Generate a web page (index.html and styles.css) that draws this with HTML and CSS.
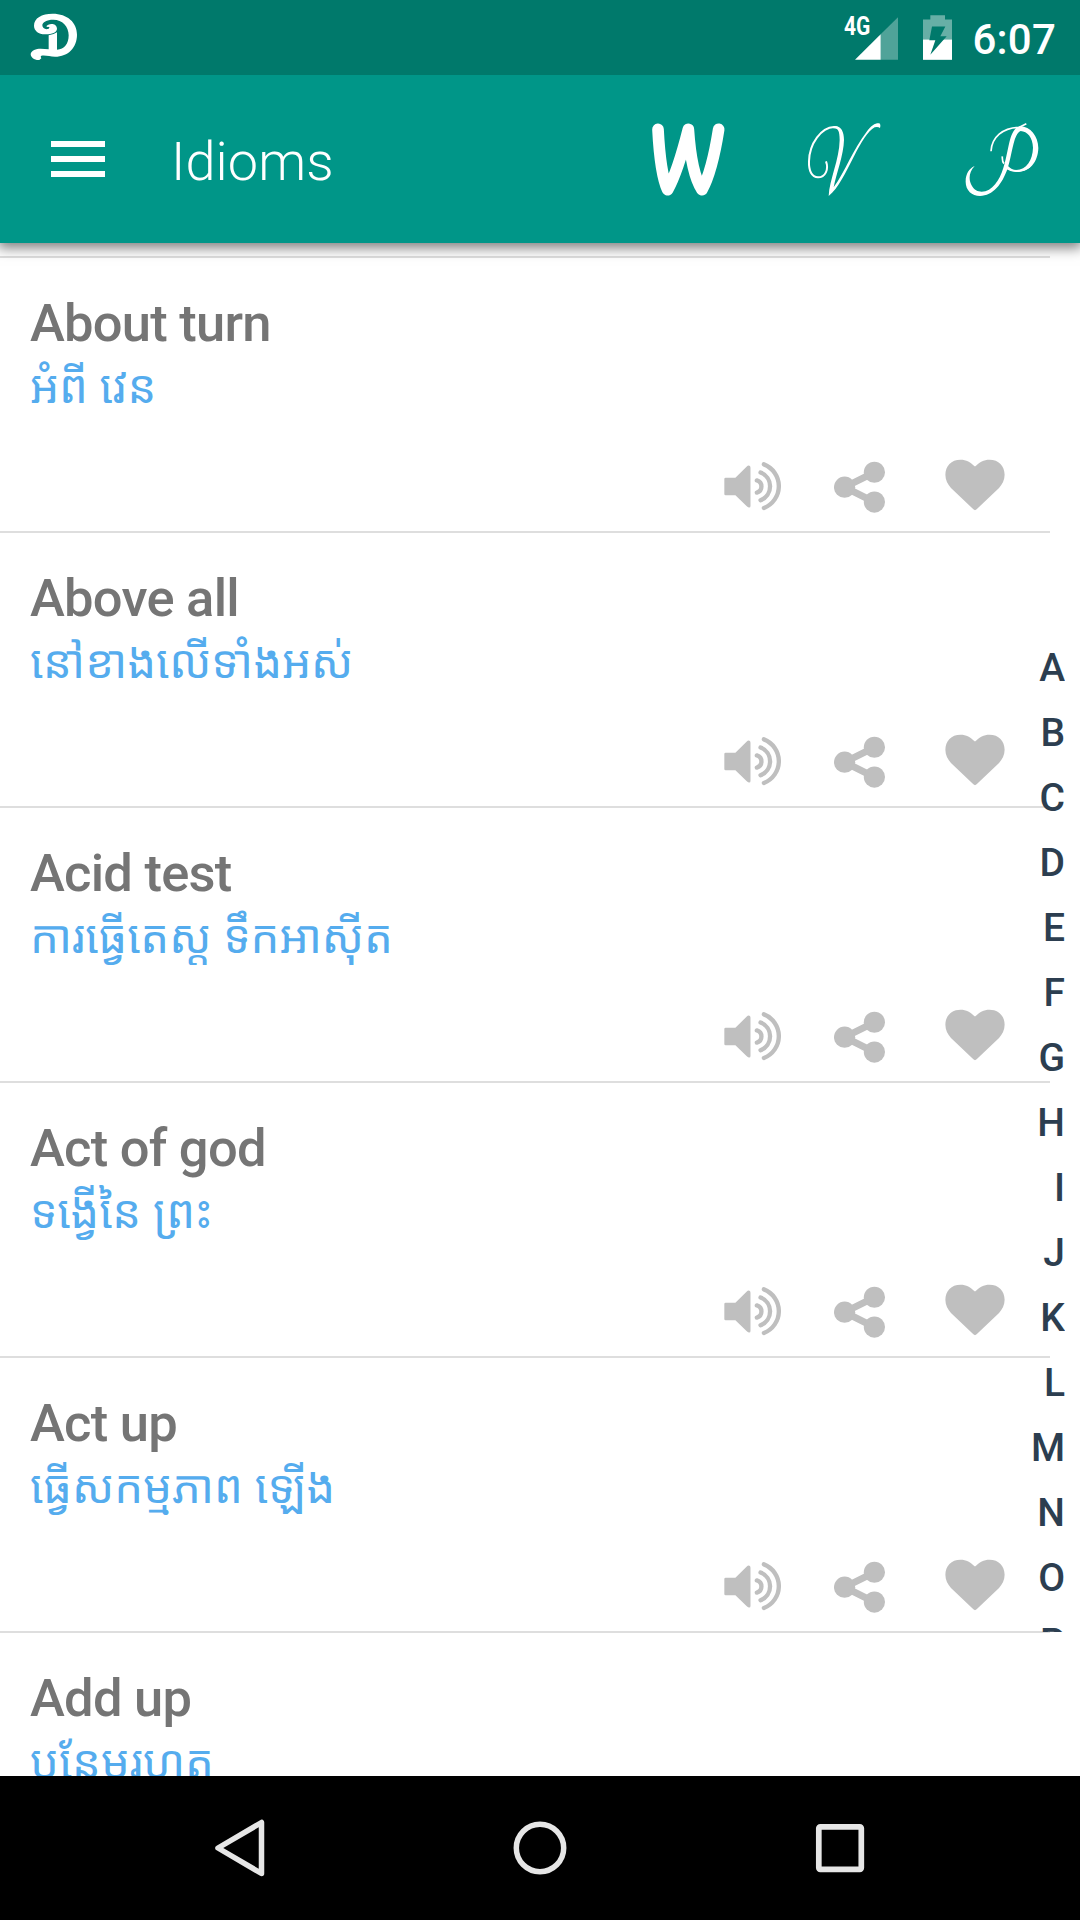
FILE: index.html
```html
<!DOCTYPE html>
<html lang="en">
<head>
<meta charset="utf-8">
<title>Idioms</title>
<link rel="stylesheet" href="styles.css">
</head>
<body>
<svg class="sprite" aria-hidden="true">
  <symbol id="speaker" viewBox="0 0 170 146">
    <path d="M5 47H34L68 13Q72 9 76 11Q79 12 79 17V131Q79 136 75 136Q72 136 68 132L34 99H5Q1 99 1 95V51Q1 47 5 47Z" fill="currentColor"/>
    <path d="M98 55A18.700 18.700 0 0 1 98 91M109 31A44.500 44.500 0 0 1 109 114M119 7A69.700 69.700 0 0 1 119 137" fill="none" stroke="currentColor" stroke-width="13" stroke-linecap="round"/>
  </symbol>
  <symbol id="share" viewBox="0 0 154 158">
    <path d="M122 33L32 78L122 123" fill="none" stroke="currentColor" stroke-width="21"/>
    <circle cx="32" cy="78" r="32" fill="currentColor"/>
    <circle cx="122" cy="33" r="32" fill="currentColor"/>
    <circle cx="122" cy="123" r="32" fill="currentColor"/>
  </symbol>
  <symbol id="heart" viewBox="0 0 182 158">
    <path d="M91 23C78 10 64 2 47 2C19 2 1 21 1 48C1 64 8 77 18 88L86 153Q91 158 96 153L164 88C174 77 181 64 181 48C181 21 163 2 135 2C118 2 104 10 91 23Z" fill="currentColor"/>
  </symbol>
</svg>

<div class="screen">
  <header class="status-bar">
    <svg class="app-logo" viewBox="90 40 144 144">
      <path d="M102 78C102 55 125 42 158 42C202 42 231 68 231 105C231 143 205 171 165 171C150 171 138 166 124 168Q120 170 124 176L118 181C103 182 92 173 92 163C94 152 108 147 122 147L146 149V107Q159 106 171 98V150C193 150 206 132 206 107C206 80 187 60 160 60C140 60 127 68 127 77C127 86 137 91 146 87Q150 84 147 81Q142 83 139 80C143 71 170 68 171 87C171 98 155 104 138 104C116 105 102 93 102 78Z" fill="#fff"/>
    </svg>
    <div class="status-icons">
      <span class="network">4G</span>
      <svg class="signal" viewBox="0 0 129 128">
        <path d="M129 0V128H77V51Z" fill="#50a399"/>
        <path d="M77 51V128H0Z" fill="#fff"/>
      </svg>
      <svg class="battery" viewBox="0 0 87 134">
        <path d="M22 0H66V13H87V74H0V13H22Z" fill="#67afa6"/>
        <path d="M0 73H87V134H0Z" fill="#fff"/>
        <path d="M27 34H67L52 63H71L22 119L37 75H19Z" fill="#00796b"/>
      </svg>
      <span class="clock">6:07</span>
    </div>
  </header>

  <div class="toolbar">
    <svg class="menu" viewBox="0 0 54 36"><path d="M0 3H54M0 18H54M0 33H54" stroke="#fff" stroke-width="6"/></svg>
    <h1 class="title">Idioms</h1>
    <div class="tools">
      <svg class="tool" viewBox="93 68 219 219">
        <path d="M111 87Q118 222 140 268Q170 214 202 87Q211 220 243 268Q273 214 293 87" fill="none" stroke="#fff" stroke-width="35" stroke-linecap="round" stroke-linejoin="round"/>
      </svg>
      <svg class="tool" viewBox="563 68 219 219">
        <path d="M617 183C626 207 615 231 593 231C574 231 565 211 566 183C567 130 603 81 641 80C655 80 661 89 663 101" fill="none" stroke="#fff" stroke-width="6"/>
        <path d="M641 77C662 76 671 93 671 119C670 164 648 220 640 261C674 214 699 145 739 94C754 75 764 68 777 69Q782 72 779 83Q773 78 763 81C743 91 723 126 701 168C675 218 654 265 625 287C627 239 657 178 658 119C658 91 653 83 638 83Z" fill="#fff"/>
      </svg>
      <svg class="tool" viewBox="1034 68 219 219">
        <path d="M1112 153C1114 111 1147 82 1197 81M1218 70L1194 82M1146 168Q1145 183 1151 190M1159 204C1177 216 1209 215 1228 199" fill="none" stroke="#fff" stroke-width="5"/>
        <path d="M1199 78C1231 79 1253 107 1254 143C1253 187 1226 216 1188 215Q1171 214 1160 205L1164 198Q1173 209 1188 209C1218 208 1237 180 1238 142C1237 111 1221 93 1201 92C1179 101 1177 156 1162 204C1145 253 1118 286 1079 287C1054 287 1035 269 1036 242C1036 222 1046 204 1063 197C1045 216 1044 239 1055 257C1065 276 1088 278 1106 268C1134 252 1148 213 1156 177C1167 134 1170 83 1199 78Z" fill="#fff"/>
      </svg>
    </div>
  </div>

  <main class="content">
    <ul class="idioms">
      <li class="idiom">
        <h2 class="phrase">About turn</h2>
        <p class="meaning" lang="km">អំពី វេន</p>
        <div class="actions"><svg class="speaker"><use href="#speaker"/></svg><svg class="share"><use href="#share"/></svg><svg class="heart"><use href="#heart"/></svg></div>
      </li>
      <li class="idiom">
        <h2 class="phrase">Above all</h2>
        <p class="meaning" lang="km">នៅខាងលើទាំងអស់</p>
        <div class="actions"><svg class="speaker"><use href="#speaker"/></svg><svg class="share"><use href="#share"/></svg><svg class="heart"><use href="#heart"/></svg></div>
      </li>
      <li class="idiom">
        <h2 class="phrase">Acid test</h2>
        <p class="meaning" lang="km">ការធ្វើតេស្ត ទឹកអាស៊ីត</p>
        <div class="actions"><svg class="speaker"><use href="#speaker"/></svg><svg class="share"><use href="#share"/></svg><svg class="heart"><use href="#heart"/></svg></div>
      </li>
      <li class="idiom">
        <h2 class="phrase">Act of god</h2>
        <p class="meaning" lang="km">ទង្វើនៃ ព្រះ</p>
        <div class="actions"><svg class="speaker"><use href="#speaker"/></svg><svg class="share"><use href="#share"/></svg><svg class="heart"><use href="#heart"/></svg></div>
      </li>
      <li class="idiom">
        <h2 class="phrase">Act up</h2>
        <p class="meaning" lang="km">ធ្វើសកម្មភាព ឡើង</p>
        <div class="actions"><svg class="speaker"><use href="#speaker"/></svg><svg class="share"><use href="#share"/></svg><svg class="heart"><use href="#heart"/></svg></div>
      </li>
      <li class="idiom">
        <h2 class="phrase">Add up</h2>
        <p class="meaning" lang="km">បន្ថែមរហូត</p>
      </li>
    </ul>
    <ol class="index">
      <li>A</li><li>B</li><li>C</li><li>D</li><li>E</li><li>F</li><li>G</li><li>H</li><li>I</li><li>J</li><li>K</li><li>L</li><li>M</li><li>N</li><li>O</li><li>P</li>
    </ol>
  </main>

  <nav class="nav-bar">
    <svg class="nav-icon" viewBox="0 0 60 60"><path d="M8 30L51.500 4.500V55.500Z" fill="none" stroke="#e6e6e6" stroke-width="5.500" stroke-linejoin="round"/></svg>
    <svg class="nav-icon" viewBox="0 0 60 60"><circle cx="30" cy="30" r="23.700" fill="none" stroke="#e6e6e6" stroke-width="5.500"/></svg>
    <svg class="nav-icon" viewBox="0 0 60 60"><rect x="8.800" y="8.800" width="42.500" height="42.500" rx="1.500" fill="none" stroke="#e6e6e6" stroke-width="5.700"/></svg>
  </nav>
</div>
</body>
</html>
```
FILE: styles.css
```css
* { box-sizing: border-box; margin: 0; padding: 0; }
body { font-family: Roboto, "Noto Sans", sans-serif; background: #fff; }
ul, ol { list-style: none; }
svg { display: block; flex: none; }
.sprite { position: absolute; width: 0; height: 0; }

.screen { display: flex; flex-direction: column; width: 1080px; height: 1920px; overflow: hidden; }

.status-bar { display: flex; flex: none; justify-content: space-between; height: 75px; padding: 13px 24px 0 30px; background: #00796b; color: #fff; }
.app-logo { width: 48px; height: 48px; }
.status-icons { display: flex; align-items: flex-start; }
.network { width: 11px; font-size: 25px; font-weight: 700; line-height: 28px; transform: scaleX(.84); transform-origin: left; }
.signal { width: 43px; height: 43px; margin-top: 4px; }
.battery { width: 29px; height: 45px; margin: 2px 21px 0 25px; }
.clock { margin-top: 2px; font-size: 42px; font-weight: 500; line-height: 50px; letter-spacing: .2px; }

.toolbar { display: flex; flex: none; align-items: center; position: relative; z-index: 2; height: 168px; padding: 0 42px 0 51px; background: #009688; color: #fff; box-shadow: 0 3px 12px 2px rgba(0, 0, 0, .5); clip-path: inset(0 0 -30px 0); }
.menu { width: 54px; height: 36px; }
.title { margin: 6px 0 0 66px; font-size: 54px; font-weight: 300; line-height: 64px; letter-spacing: .1px; }
.tools { display: flex; gap: 83.700px; margin-left: auto; }
.tool { width: 73px; height: 73px; overflow: visible; }

.content { position: relative; flex: 1; min-height: 0; overflow: hidden; padding-top: 13px; }
.idioms { width: 1050px; border-top: 2px solid #dedede; }
.idiom { display: flex; flex-direction: column; height: 275px; padding: 33px 45px 0 30px; border-bottom: 2px solid #dedede; }
.phrase { color: #757575; font-size: 52.500px; font-weight: 500; line-height: 64px; letter-spacing: -.75px; white-space: nowrap; }
.meaning { height: 64px; color: #55acee; font-family: "Noto Sans Khmer", "Noto Sans", sans-serif; font-size: 45.500px; line-height: 60px; white-space: nowrap; }
.actions { display: flex; align-items: center; align-self: flex-end; margin-top: 39px; color: #bfbfbf; }
.speaker { width: 57px; height: 49px; }
.share { width: 51px; height: 53px; margin: 3px 60px 0 53px; }
.heart { width: 60px; height: 52px; margin-top: -3px; }

.index { position: absolute; top: 393px; right: 15px; height: 996px; overflow: hidden; color: #2c3e50; font-size: 39px; font-weight: 500; line-height: 65px; text-align: right; }

.nav-bar { display: flex; flex: none; align-items: center; justify-content: center; gap: 240px; height: 144px; background: #000; }
.nav-icon { width: 60px; height: 60px; }
```
